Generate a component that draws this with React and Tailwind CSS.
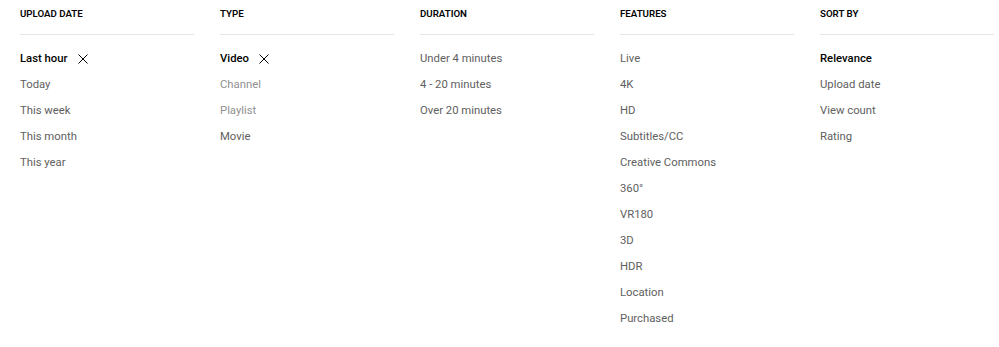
import React from "react";

const X = () => (
  <svg width="10" height="10" viewBox="0 0 10 10" className="ml-[10px] -mt-[2px]">
    <path d="M0.5 0.5 L9.5 9.5 M9.5 0.5 L0.5 9.5" stroke="#030303" strokeWidth="1" fill="none" />
  </svg>
);

const columns = [
  {
    title: "UPLOAD DATE",
    items: [
      { t: "Last hour", s: "active" },
      { t: "Today" },
      { t: "This week" },
      { t: "This month" },
      { t: "This year" },
    ],
  },
  {
    title: "TYPE",
    items: [
      { t: "Video", s: "active" },
      { t: "Channel", s: "disabled" },
      { t: "Playlist", s: "disabled" },
      { t: "Movie" },
    ],
  },
  {
    title: "DURATION",
    items: [{ t: "Under 4 minutes" }, { t: "4 - 20 minutes" }, { t: "Over 20 minutes" }],
  },
  {
    title: "FEATURES",
    items: [
      { t: "Live" },
      { t: "4K" },
      { t: "HD" },
      { t: "Subtitles/CC" },
      { t: "Creative Commons" },
      { t: "360°" },
      { t: "VR180" },
      { t: "3D" },
      { t: "HDR" },
      { t: "Location" },
      { t: "Purchased" },
    ],
  },
  {
    title: "SORT BY",
    items: [
      { t: "Relevance", s: "selected" },
      { t: "Upload date" },
      { t: "View count" },
      { t: "Rating" },
    ],
  },
];

export default function App() {
  return (
    <div className="w-[999px] h-[347px] bg-white font-['Roboto',sans-serif] flex gap-[26px] pl-[20px]">
      {columns.map((c) => (
        <div key={c.title} className="w-[174px] flex flex-col">
          <div className="h-[35px] border-b border-[#e5e5e5] pt-[8px] text-[9.7px] leading-[12px] font-semibold text-[#030303]">
            {c.title}
          </div>
          <div className="mt-[11px] flex flex-col">
            {c.items.map((it) => (
              <div
                key={it.t}
                className={
                  "h-[26px] flex items-center pt-[1px] text-[11.3px] " +
                  (it.s === "active" || it.s === "selected"
                    ? "font-medium text-[#030303]"
                    : it.s === "disabled"
                    ? "text-[#909090]"
                    : "text-[#606060]")
                }
              >
                {it.t}
                {it.s === "active" && <X />}
              </div>
            ))}
          </div>
        </div>
      ))}
    </div>
  );
}
